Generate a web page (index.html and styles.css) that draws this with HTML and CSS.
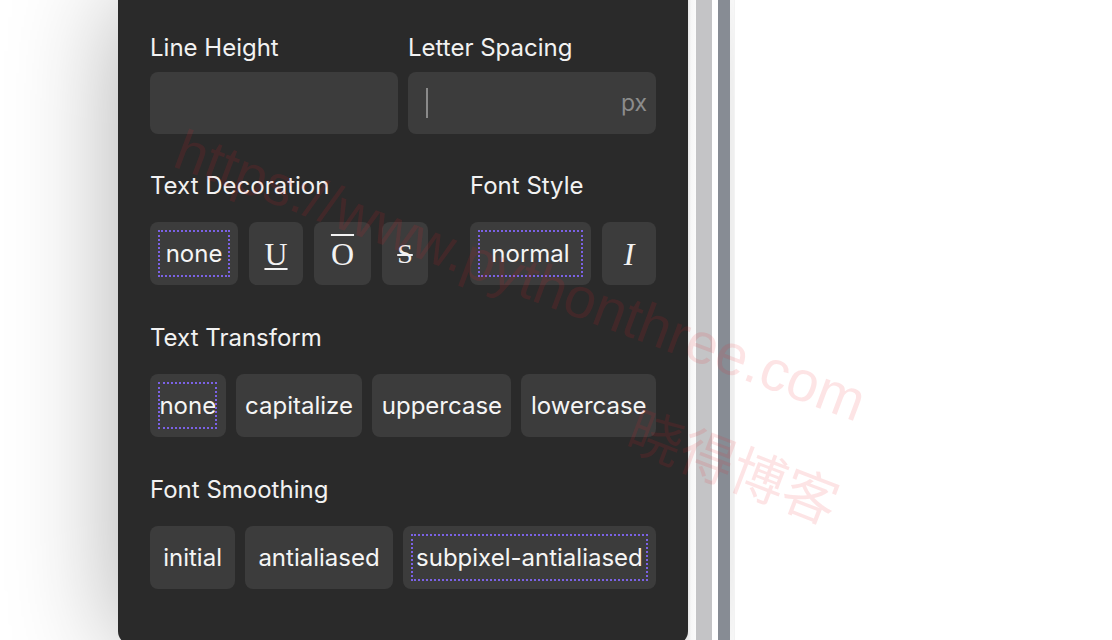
FILE: index.html
```html
<!DOCTYPE html>
<html lang="en">
<head>
<meta charset="utf-8">
<title>Typography panel</title>
<link rel="stylesheet" href="styles.css">
</head>
<body>
<div class="stage">
  <div class="gutter"></div>
  <section class="panel">
    <div class="field-grid">
      <div class="field">
        <div class="label">Line Height</div>
        <div class="input"></div>
      </div>
      <div class="field">
        <div class="label">Letter Spacing</div>
        <div class="input">
          <span class="caret"></span>
          <span class="unit">px</span>
        </div>
      </div>
    </div>

    <div class="split">
      <div class="group">
        <div class="label label-gap">Text Decoration</div>
        <div class="btn-row">
          <button class="btn btn-none"><span class="focus pad-wide">none</span></button>
          <button class="btn sym sym-u"><span class="serif under">U</span></button>
          <button class="btn sym sym-o"><span class="serif over">O</span></button>
          <button class="btn sym sym-s"><span class="serif strike">S</span></button>
        </div>
      </div>
      <div class="group">
        <div class="label label-gap">Font Style</div>
        <div class="btn-row">
          <button class="btn btn-normal"><span class="focus pad-normal">normal</span></button>
          <button class="btn sym sym-i"><span class="serif ital">I</span></button>
        </div>
      </div>
    </div>

    <div class="section">
      <div class="label label-gap">Text Transform</div>
      <div class="btn-row fill">
        <button class="btn grow"><span class="focus pad-tight">none</span></button>
        <button class="btn grow"><span class="plain pad-tight">capitalize</span></button>
        <button class="btn grow"><span class="plain pad-tight">uppercase</span></button>
        <button class="btn grow"><span class="plain pad-tight">lowercase</span></button>
      </div>
    </div>

    <div class="section">
      <div class="label label-gap">Font Smoothing</div>
      <div class="btn-row fill">
        <button class="btn grow"><span class="plain pad-mid">initial</span></button>
        <button class="btn grow"><span class="plain pad-mid">antialiased</span></button>
        <button class="btn grow"><span class="focus pad-mid">subpixel-antialiased</span></button>
      </div>
    </div>
  </section>
  <div class="strip"></div>
  <div class="bar bar-light"></div>
  <div class="bar-gap"></div>
  <div class="bar bar-dark"></div>
  <div class="canvas"></div>
</div>
<div class="watermark wm-url">https://www.pythonthree.com</div>
<div class="watermark wm-cn">晓得博客</div>
</body>
</html>
```
FILE: styles.css
```css
* { box-sizing: border-box; }
html, body {
  margin: 0;
  height: 100%;
  overflow: hidden;
  background: #ffffff;
}
body {
  font-family: Inter, "Noto Sans", "Liberation Sans", sans-serif;
  color: #f2f2f2;
}
.stage {
  display: flex;
  height: 660px;
  align-items: flex-start;
}
.gutter {
  width: 118px;
  flex: none;
}
.panel {
  width: 570px;
  flex: none;
  background: #2a2a2a;
  padding: 33px 32px 56px;
  border-radius: 0 0 14px 14px;
  box-shadow: 0 0 110px rgba(0, 0, 0, 0.32);
  position: relative;
  z-index: 1;
}
.label {
  font-size: 24px;
  line-height: 30px;
  color: #f2f2f2;
  white-space: nowrap;
}
.label-gap { margin-bottom: 21px; }
.field-grid {
  display: grid;
  grid-template-columns: 1fr 1fr;
  gap: 10px;
}
.field .label { margin-bottom: 9px; }
.input {
  height: 62px;
  background: #3c3c3c;
  border-radius: 8px;
  display: flex;
  align-items: center;
  padding: 0 9px 0 18px;
}
.caret {
  width: 2px;
  height: 30px;
  background: #8a8a8a;
}
.unit {
  margin-left: auto;
  font-size: 23px;
  color: #8c8c8c;
}
.split {
  display: flex;
  justify-content: space-between;
  margin-top: 37px;
}
.section { margin-top: 38px; }
.btn-row {
  display: flex;
  gap: 11px;
}
.fill { gap: 10px; }
.btn {
  height: 63px;
  border: 0;
  margin: 0;
  background: #3c3c3c;
  border-radius: 8px;
  color: #f5f5f5;
  font-family: inherit;
  font-size: 24px;
  display: flex;
  align-items: center;
  justify-content: center;
  padding: 0 8px;
  white-space: nowrap;
}
.grow { flex: 1 1 auto; min-width: 0; }
.focus, .plain {
  height: 47px;
  line-height: 47px;
  display: block;
}
.focus { outline: 2px dotted #7b62e6; outline-offset: -2px; }
.pad-wide { padding: 0 8px; }
.pad-normal { padding: 0 13px; }
.pad-tight { padding: 0 1px; }
.pad-mid { padding: 0 5px; }
.btn-none { width: 88px; }
.btn-normal { width: 121px; }
.sym-u { width: 54px; }
.sym-o { width: 57px; }
.sym-s { width: 46px; }
.sym-i { width: 54px; }
.serif {
  font-family: "Liberation Serif", "DejaVu Serif", serif;
  font-size: 32px;
  line-height: 1;
  color: #f2f2f2;
}
.under { text-decoration: underline; text-decoration-thickness: 2px; text-underline-offset: 3px; }
.over { text-decoration: overline; text-decoration-thickness: 2px; }
.strike { text-decoration: line-through; text-decoration-thickness: 2px; font-size: 28px; }
.ital { font-style: italic; }
.strip {
  width: 8px;
  height: 660px;
  flex: none;
  background: linear-gradient(to right, #e8e8e8, #f7f7f7 40%, #fbfbfb);
  position: relative;
  z-index: 2;
}
.bar { height: 660px; flex: none; position: relative; z-index: 2; }
.bar-light { width: 16px; background: #c4c4c6; }
.bar-gap { width: 6px; height: 660px; background: #ffffff; flex: none; position: relative; z-index: 2; }
.bar-dark { width: 12px; background: #878c94; }
.canvas {
  flex: 1;
  height: 660px;
  background: #ffffff;
  border-left: 1px solid #f3f3f3;
  margin-left: 4px;
  position: relative;
  z-index: 2;
}
.watermark {
  position: absolute;
  z-index: 5;
  pointer-events: none;
  color: rgba(235, 30, 40, 0.12);
  font-family: "Liberation Sans", sans-serif;
  white-space: nowrap;
  transform-origin: 0 50%;
}
.wm-url {
  left: 178px;
  top: 114px;
  font-size: 57px;
  transform: rotate(20.5deg);
}
.wm-cn {
  left: 632px;
  top: 384px;
  font-size: 55px;
  font-family: "Noto Sans CJK SC", sans-serif;
  transform: rotate(21deg);
}
```
